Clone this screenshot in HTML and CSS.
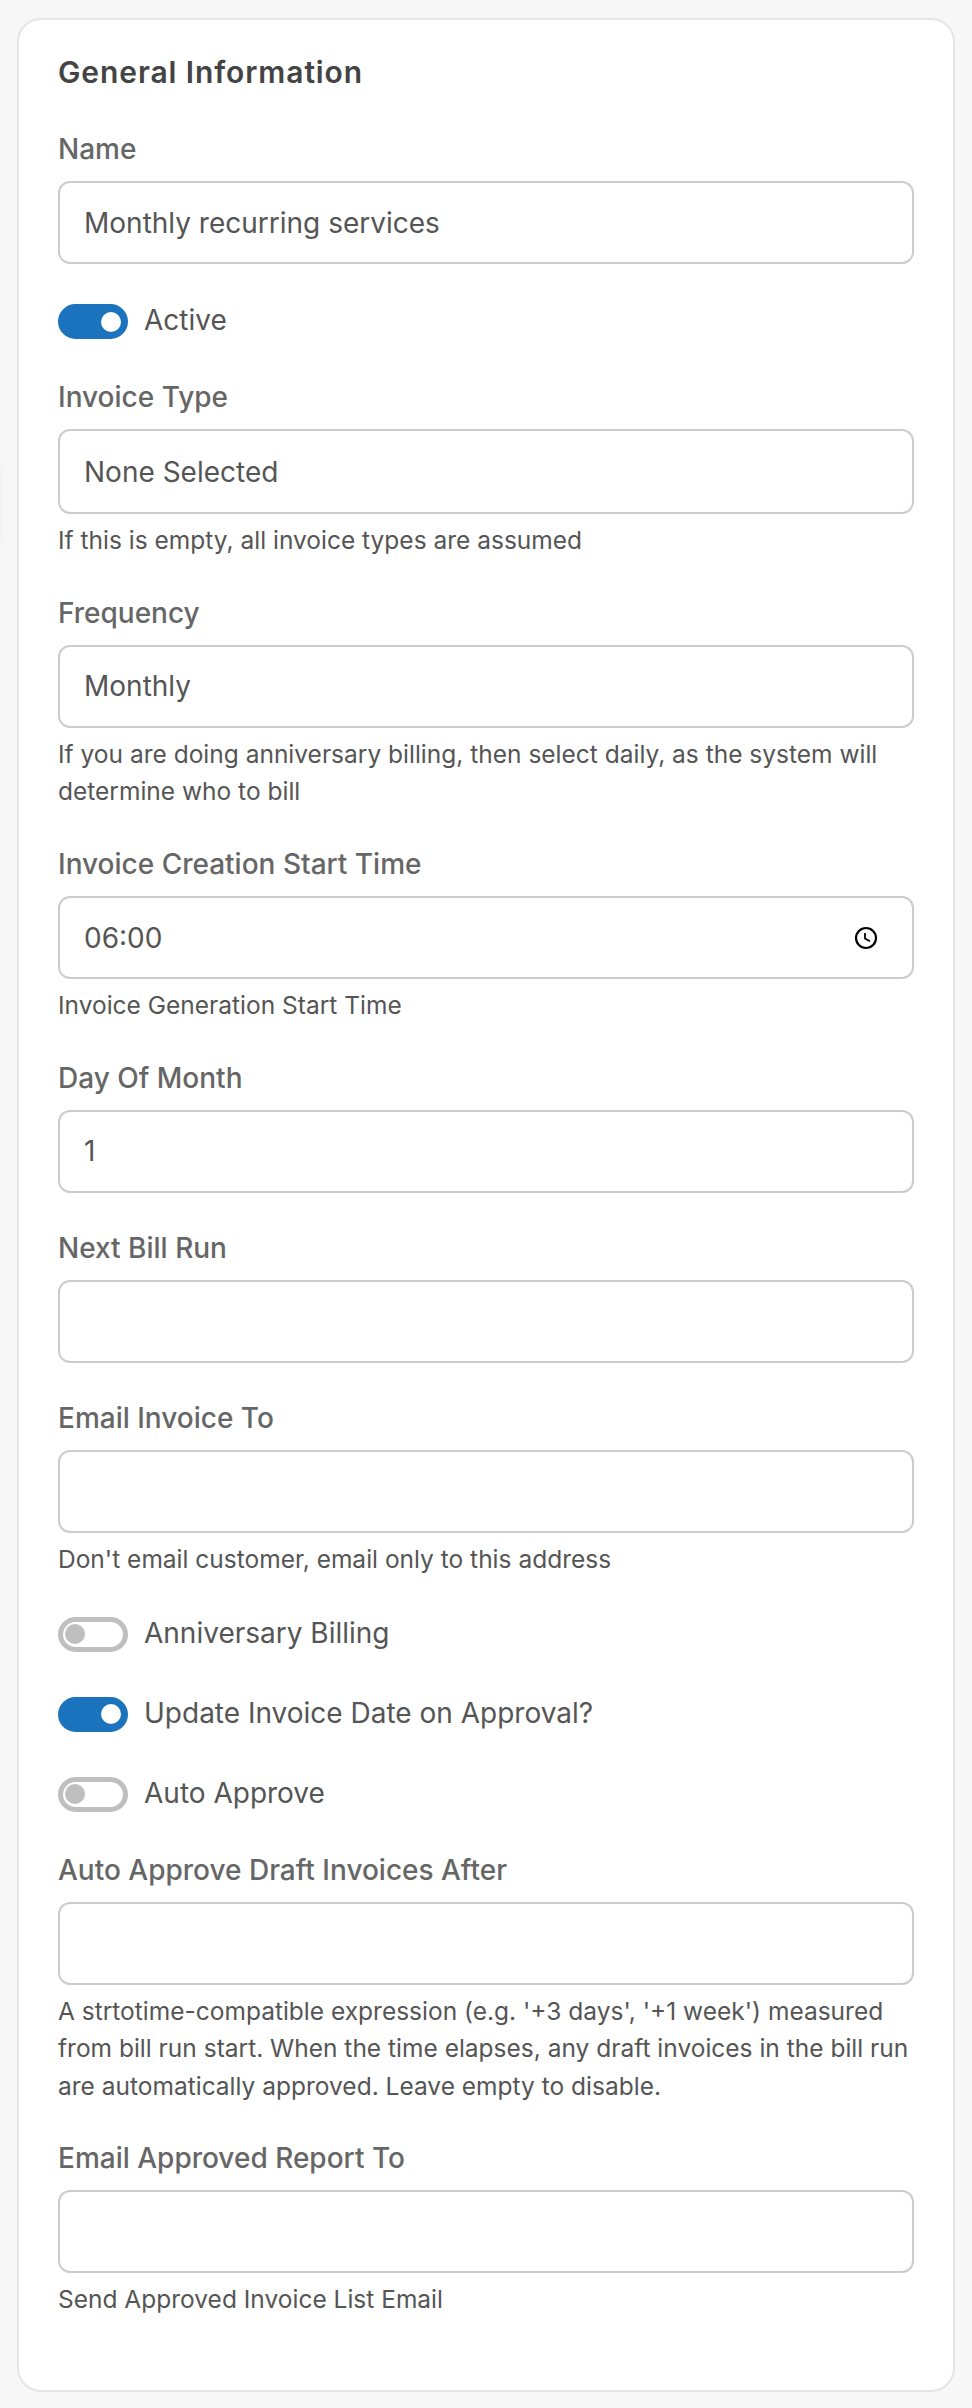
FILE: index.html
```html
<!DOCTYPE html>
<html lang="en">

<head>
    <meta charset="UTF-8">
    <title>General Information</title>
    <link rel="stylesheet" href="styles.css">
</head>

<body>
    <div class="edge-shadow"></div>

    <form class="card">
        <h2 class="card-title">General Information</h2>

        <div class="field">
            <label class="field-label">Name</label>
            <input class="field-input" type="text" value="Monthly recurring services">
        </div>

        <div class="toggle-row">
            <span class="toggle on"></span>
            <span class="toggle-label">Active</span>
        </div>

        <div class="field">
            <label class="field-label">Invoice Type</label>
            <input class="field-input tall" type="text" value="None Selected">
            <p class="field-hint">If this is empty, all invoice types are assumed</p>
        </div>

        <div class="field">
            <label class="field-label">Frequency</label>
            <input class="field-input" type="text" value="Monthly">
            <p class="field-hint">If you are doing anniversary billing, then select daily, as the system will determine who to bill</p>
        </div>

        <div class="field">
            <label class="field-label">Invoice Creation Start Time</label>
            <div class="input-wrap">
                <input class="field-input" type="text" value="06:00">
                <svg class="clock-icon" viewBox="0 0 24 24" fill="none" stroke="#000" stroke-width="2.2">
                    <circle cx="12" cy="12" r="10"></circle>
                    <path d="M11 7v5.5l5 2.8" stroke-width="1.8"></path>
                </svg>
            </div>
            <p class="field-hint">Invoice Generation Start Time</p>
        </div>

        <div class="field">
            <label class="field-label">Day Of Month</label>
            <input class="field-input" type="text" value="1">
        </div>

        <div class="field">
            <label class="field-label">Next Bill Run</label>
            <input class="field-input" type="text">
        </div>

        <div class="field">
            <label class="field-label">Email Invoice To</label>
            <input class="field-input" type="text">
            <p class="field-hint">Don't email customer, email only to this address</p>
        </div>

        <div class="toggle-row">
            <span class="toggle"></span>
            <span class="toggle-label">Anniversary Billing</span>
        </div>

        <div class="toggle-row">
            <span class="toggle on"></span>
            <span class="toggle-label">Update Invoice Date on Approval?</span>
        </div>

        <div class="toggle-row">
            <span class="toggle"></span>
            <span class="toggle-label">Auto Approve</span>
        </div>

        <div class="field">
            <label class="field-label">Auto Approve Draft Invoices After</label>
            <input class="field-input" type="text">
            <p class="field-hint">A strtotime-compatible expression (e.g. '+3 days', '+1 week') measured from bill run start. When the time elapses, any draft invoices in the bill run are automatically approved. Leave empty to disable.</p>
        </div>

        <div class="field">
            <label class="field-label">Email Approved Report To</label>
            <input class="field-input" type="text">
            <p class="field-hint">Send Approved Invoice List Email</p>
        </div>
    </form>
</body>

</html>
```

FILE: styles.css
```css
* {
    box-sizing: border-box;
}

body {
    font-family: Inter, "Liberation Sans", sans-serif;
    background: #f7f7f7;
    color: #555;
    margin: 0;
    padding: 18px 17px 16px;
}

.edge-shadow {
    position: absolute;
    left: -12px;
    top: 465px;
    width: 12px;
    height: 80px;
    box-shadow: 0 0 10px rgba(0, 0, 0, 0.05);
}

.card {
    background: #fff;
    border: 2px solid #e5e5e5;
    border-radius: 24px;
    padding: 34px 39px 0;
    height: 2374px;
}

.card-title {
    font-size: 30px;
    line-height: 36px;
    font-weight: 600;
    letter-spacing: 0.9px;
    color: #444;
    margin: 0 0 38px;
}

.field {
    margin-bottom: 34px;
}

.field-label {
    display: block;
    font-size: 28px;
    line-height: 42px;
    font-weight: 500;
    color: #666;
    margin-bottom: 11px;
}

.field-input {
    display: block;
    width: 100%;
    height: 83px;
    padding: 0 24px;
    font-family: inherit;
    font-size: 28px;
    color: #555;
    background: #fff;
    border: 2px solid #ccc;
    border-radius: 12px;
}

.field-input.tall {
    height: 85px;
}

.field-hint {
    font-size: 24.5px;
    line-height: 37.5px;
    margin: 8px 0 -1.75px;
}

.input-wrap {
    position: relative;
}

.clock-icon {
    position: absolute;
    right: 36px;
    top: 30px;
    width: 24px;
    height: 24px;
}

.toggle-row {
    display: flex;
    align-items: center;
    gap: 16px;
    height: 44px;
    margin-bottom: 36px;
}

.toggle-row + .field {
    margin-top: -2px;
}

.toggle {
    position: relative;
    width: 70px;
    height: 35px;
    margin-top: 3px;
    border: 5px solid #bfbfbf;
    border-radius: 18px;
}

.toggle::after {
    content: "";
    position: absolute;
    left: 2px;
    top: 2.5px;
    width: 20px;
    height: 20px;
    border-radius: 50%;
    background: #bfbfbf;
}

.toggle.on {
    background: #1c73bd;
    border-color: #1c73bd;
}

.toggle.on::after {
    left: auto;
    right: 2px;
    background: #fff;
}

.toggle-label {
    font-size: 28px;
    color: #555;
}
```
